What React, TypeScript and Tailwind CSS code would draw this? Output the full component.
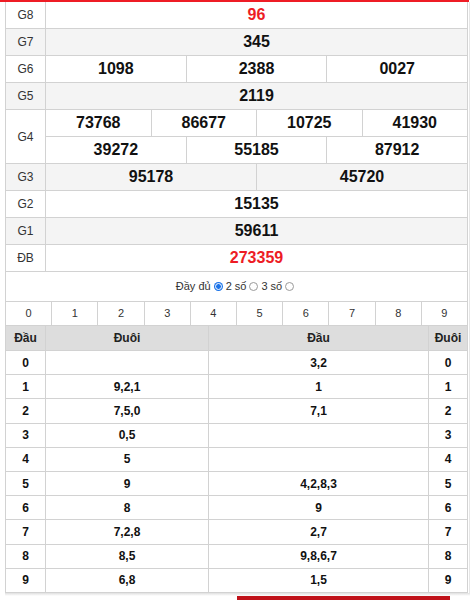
const prizes: { label: string; rows: string[][]; red?: boolean; gray?: boolean }[] = [
  { label: "G8", rows: [["96"]], red: true },
  { label: "G7", rows: [["345"]], gray: true },
  { label: "G6", rows: [["1098", "2388", "0027"]] },
  { label: "G5", rows: [["2119"]], gray: true },
  { label: "G4", rows: [["73768", "86677", "10725", "41930"], ["39272", "55185", "87912"]] },
  { label: "G3", rows: [["95178", "45720"]], gray: true },
  { label: "G2", rows: [["15135"]] },
  { label: "G1", rows: [["59611"]], gray: true },
  { label: "ĐB", rows: [["273359"]], red: true },
];

const loto: [string, string, string, string][] = [
  ["0", "", "3,2", "0"],
  ["1", "9,2,1", "1", "1"],
  ["2", "7,5,0", "7,1", "2"],
  ["3", "0,5", "", "3"],
  ["4", "5", "", "4"],
  ["5", "9", "4,2,8,3", "5"],
  ["6", "8", "9", "6"],
  ["7", "7,2,8", "2,7", "7"],
  ["8", "8,5", "9,8,6,7", "8"],
  ["9", "6,8", "1,5", "9"],
];

const Radio = ({ checked }: { checked?: boolean }) =>
  checked ? (
    <span className="inline-flex w-[9px] h-[9px] rounded-full bg-[#1a73e8] items-center justify-center mx-[3px]">
      <span className="w-[5px] h-[5px] rounded-full bg-[#1a73e8] border border-white box-content" />
    </span>
  ) : (
    <span className="inline-block w-[9px] h-[9px] rounded-full border border-[#9a9a9a] bg-white mx-[3px]" />
  );

export default function App() {
  return (
    <div className="w-[471px] h-[600px] overflow-hidden bg-white font-['Liberation_Sans',Arial,sans-serif] text-[#222]">
      <div className="h-[2px] w-[469px] bg-[#ee1c25]" />
      <div className="ml-[5px] w-[465px] border-r border-[#e6e6e6]">
        {/* bảng kết quả */}
        <div className="w-[463px] border-l border-r border-[#d2d2d2]">
          {prizes.map((p) => (
            <div
              key={p.label}
              className={`flex border-b border-[#d2d2d2] ${p.gray ? "bg-[#f4f4f4]" : "bg-white"}`}
            >
              <div className="w-[40px] shrink-0 border-r border-[#d2d2d2] flex items-center justify-center text-[12px] text-[#333]">
                {p.label}
              </div>
              <div className="flex-1 flex flex-col">
                {p.rows.map((r, i) => (
                  <div
                    key={i}
                    className={`flex ${i < p.rows.length - 1 ? "h-[27px] border-b border-[#d2d2d2]" : "h-[26px]"}`}
                  >
                    {r.map((n, j) => (
                      <div
                        key={j}
                        className={`flex-1 flex items-center justify-center text-[16px] font-bold ${
                          j > 0 ? "border-l border-[#d2d2d2]" : ""
                        } ${p.red ? "text-[#ed1c24]" : "text-[#111]"}`}
                      >
                        {n}
                      </div>
                    ))}
                  </div>
                ))}
              </div>
            </div>
          ))}

          {/* chọn kiểu hiển thị */}
          <div className="h-[30px] flex items-center justify-center text-[11px] text-[#333] border-b border-[#d2d2d2]">
            <span>Đầy đủ</span>
            <Radio checked />
            <span>2 số</span>
            <Radio />
            <span>3 số</span>
            <Radio />
          </div>

          <div className="flex h-[24px] border-b border-[#d2d2d2]">
            {["0", "1", "2", "3", "4", "5", "6", "7", "8", "9"].map((d, i) => (
              <div
                key={d}
                className={`flex-1 flex items-center justify-center text-[11px] text-[#333] ${
                  i > 0 ? "border-l border-[#d2d2d2]" : ""
                }`}
              >
                {d}
              </div>
            ))}
          </div>

          {/* bảng loto */}
          <div className="flex h-[25px] bg-[#dddddd] border-b border-[#d2d2d2] text-[12px] font-bold text-[#222]">
            <div className="w-[40px] border-r border-[#d2d2d2] flex items-center justify-center">Đầu</div>
            <div className="w-[163px] border-r border-[#d2d2d2] flex items-center justify-center">Đuôi</div>
            <div className="w-[220px] border-r border-[#d2d2d2] flex items-center justify-center">Đầu</div>
            <div className="flex-1 flex items-center justify-center">Đuôi</div>
          </div>
          {loto.map((r) => (
            <div key={r[0]} className="flex h-[24.2px] border-b border-[#d2d2d2] text-[12px] font-bold text-[#111]">
              <div className="w-[40px] border-r border-[#d2d2d2] flex items-center justify-center">{r[0]}</div>
              <div className="w-[163px] border-r border-[#d2d2d2] flex items-center justify-center">{r[1]}</div>
              <div className="w-[220px] border-r border-[#d2d2d2] flex items-center justify-center">{r[2]}</div>
              <div className="flex-1 flex items-center justify-center">{r[3]}</div>
            </div>
          ))}
        </div>
      </div>
      <div className="h-[3px] w-[465px] ml-[5px] bg-gradient-to-b from-[#e0e0e0] to-white" />
      <div className="ml-[237px] w-[213px] h-[4px] bg-[#c0121a]" />
    </div>
  );
}
